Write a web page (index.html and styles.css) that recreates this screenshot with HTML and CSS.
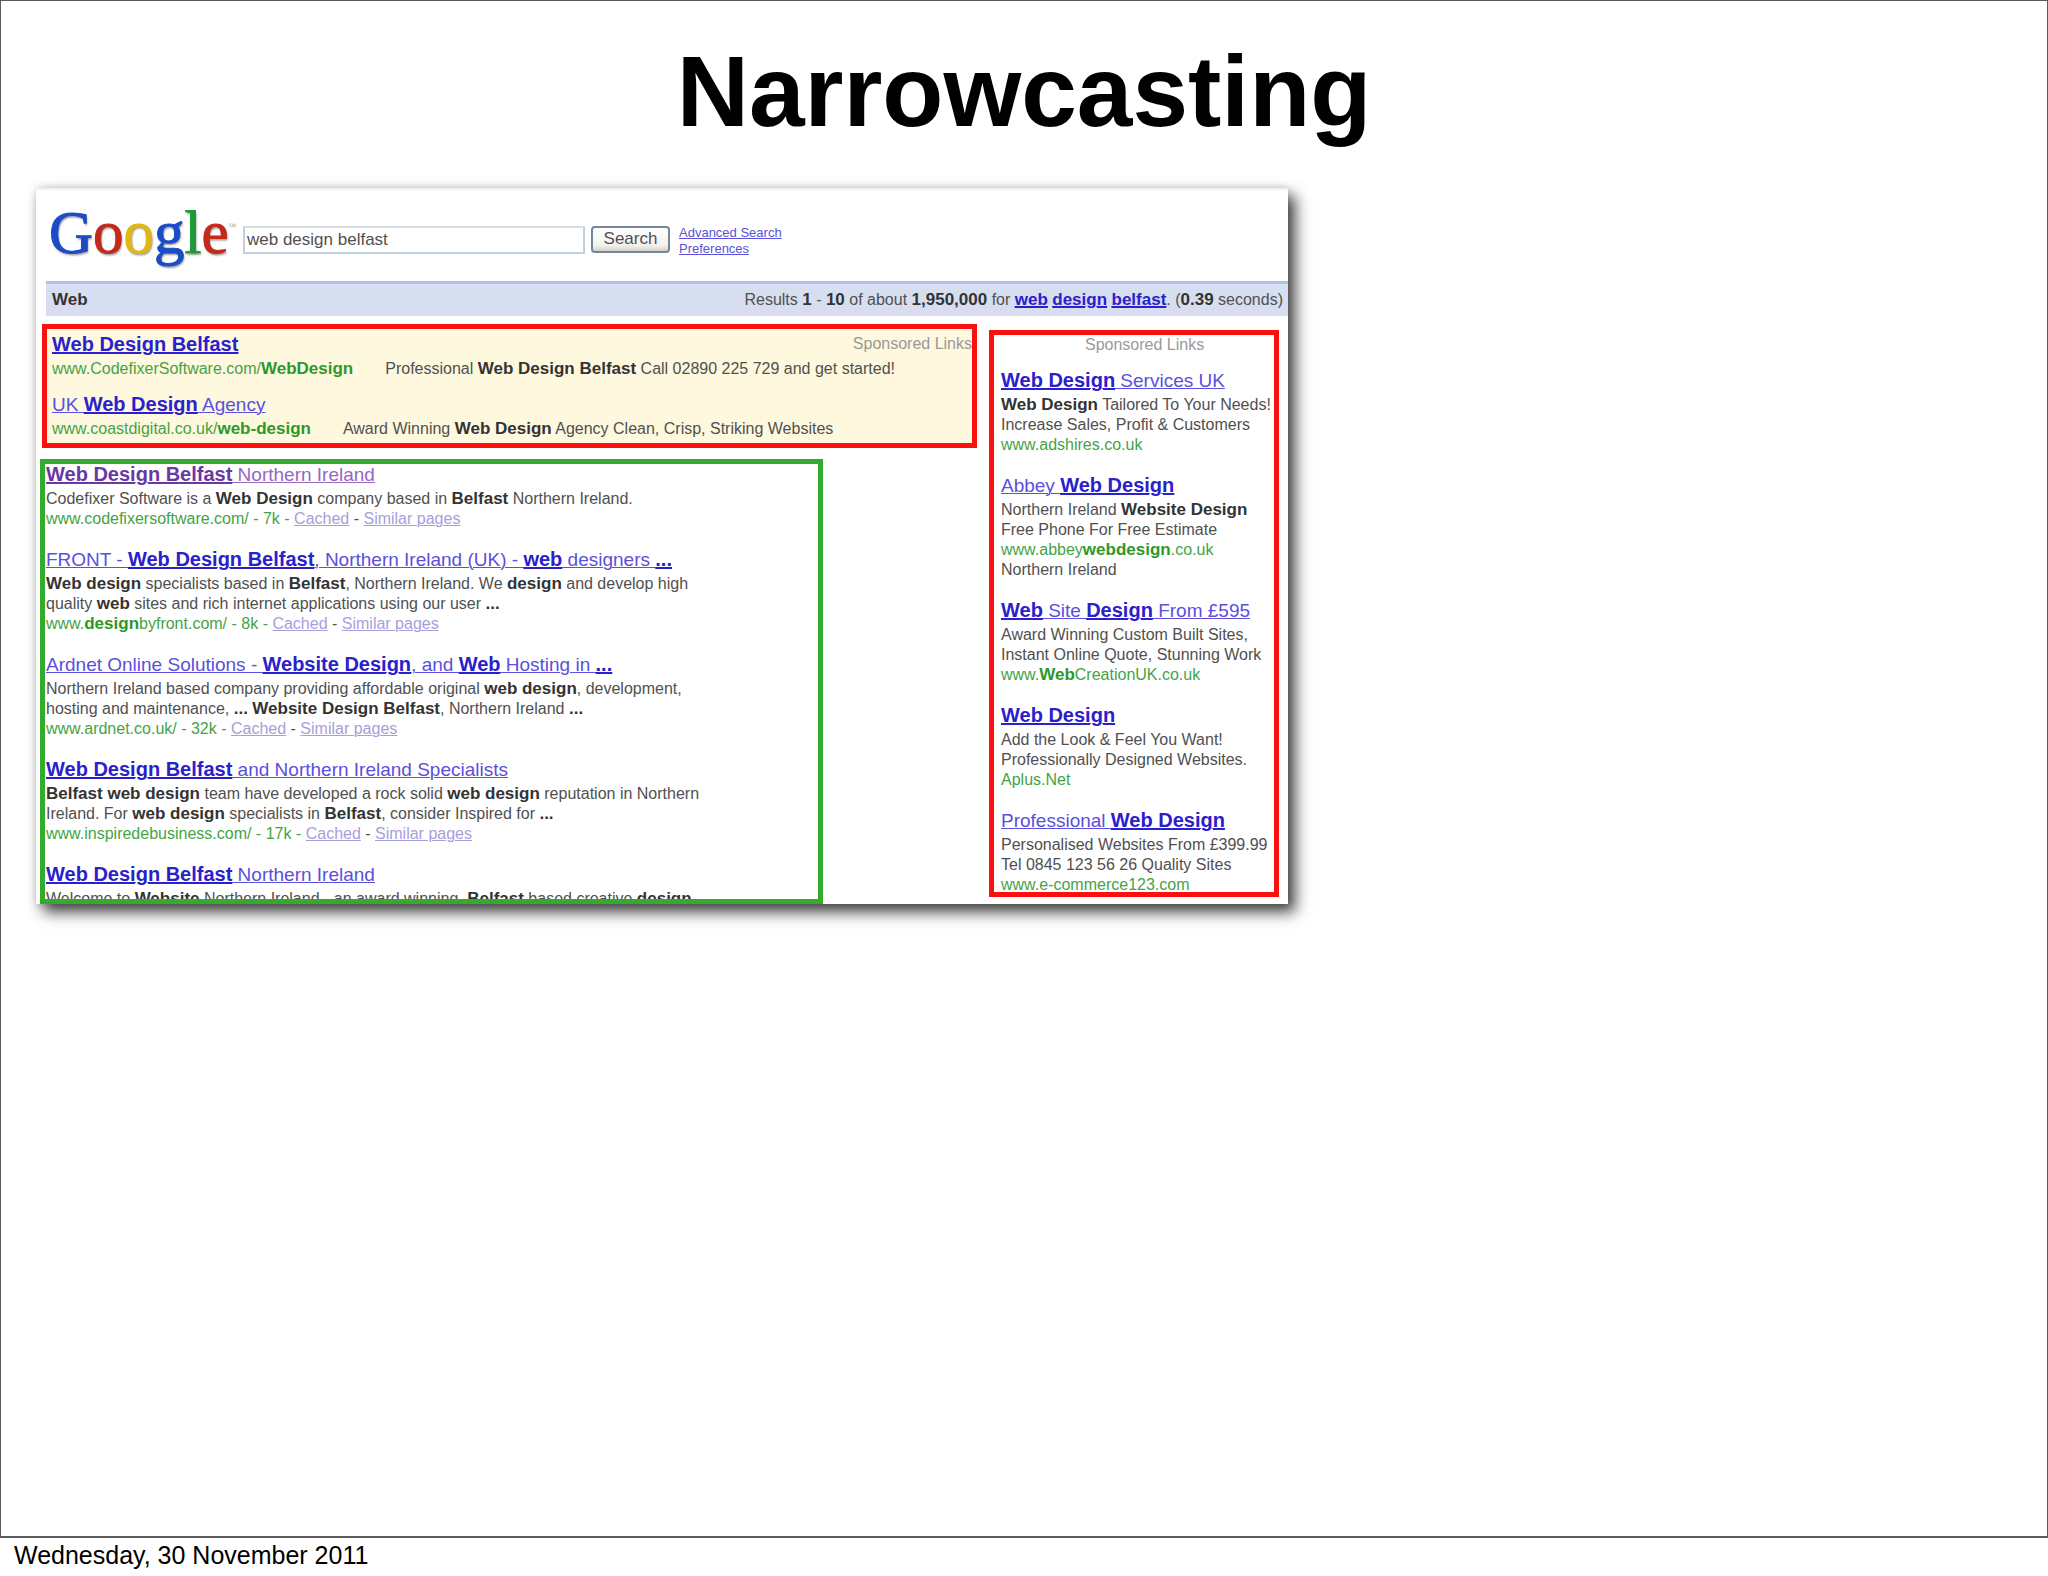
FILE: index.html
```html
<!DOCTYPE html>
<html lang="en">
<head>
<meta charset="utf-8">
<title>Narrowcasting</title>
<link rel="stylesheet" href="styles.css">
</head>
<body>
<main class="slide">
  <h1 class="slide-title">Narrowcasting</h1>
  <section class="shot">
    <header class="top">
      <div class="logo"><span class="blue">G</span><span class="red">o</span><span class="yellow">o</span><span class="blue">g</span><span class="green">l</span><span class="red">e</span><small>™</small></div>
      <form class="search">
        <input class="query" type="text" aria-label="Search query" value="web design belfast">
        <button class="go" type="button">Search</button>
      </form>
      <nav class="options"><a href="#">Advanced Search</a><a href="#">Preferences</a></nav>
    </header>
    <div class="bar">
      <b>Web</b>
      <span>Results <b>1</b> - <b>10</b> of about <b>1,950,000</b> for <a href="#"><b>web</b></a> <a href="#"><b>design</b></a> <a href="#"><b>belfast</b></a>. (<b>0.39</b> seconds)</span>
    </div>
    <div class="columns">
      <div class="main-col">
        <section class="ads">
          <div class="ad">
            <div class="ad-head"><h2><a href="#"><b>Web Design Belfast</b></a></h2><span class="label">Sponsored Links</span></div>
            <div class="ad-line"><cite>www.CodefixerSoftware.com/<b>WebDesign</b></cite><span>Professional <b>Web Design Belfast</b> Call 02890 225 729 and get started!</span></div>
          </div>
          <div class="ad">
            <h2><a href="#">UK <b>Web Design</b> Agency</a></h2>
            <div class="ad-line"><cite>www.coastdigital.co.uk/<b>web-design</b></cite><span>Award Winning <b>Web Design</b> Agency Clean, Crisp, Striking Websites</span></div>
          </div>
        </section>
        <section class="results">
          <article>
            <h2><a class="visited" href="#"><b>Web Design Belfast</b> Northern Ireland</a></h2>
            <p>Codefixer Software is a <b>Web Design</b> company based in <b>Belfast</b> Northern Ireland.</p>
            <p><cite>www.codefixersoftware.com/ - 7k -</cite> <a class="minor" href="#">Cached</a> - <a class="minor" href="#">Similar pages</a></p>
          </article>
          <article>
            <h2><a href="#">FRONT - <b>Web Design Belfast</b>, Northern Ireland (UK) - <b>web</b> designers <b>...</b></a></h2>
            <p><b>Web design</b> specialists based in <b>Belfast</b>, Northern Ireland. We <b>design</b> and develop high<br>quality <b>web</b> sites and rich internet applications using our user <b>...</b></p>
            <p><cite>www.<b>design</b>byfront.com/ - 8k -</cite> <a class="minor" href="#">Cached</a> - <a class="minor" href="#">Similar pages</a></p>
          </article>
          <article>
            <h2><a href="#">Ardnet Online Solutions - <b>Website Design</b>, and <b>Web</b> Hosting in <b>...</b></a></h2>
            <p>Northern Ireland based company providing affordable original <b>web design</b>, development,<br>hosting and maintenance, <b>...</b> <b>Website Design Belfast</b>, Northern Ireland <b>...</b></p>
            <p><cite>www.ardnet.co.uk/ - 32k -</cite> <a class="minor" href="#">Cached</a> - <a class="minor" href="#">Similar pages</a></p>
          </article>
          <article>
            <h2><a href="#"><b>Web Design Belfast</b> and Northern Ireland Specialists</a></h2>
            <p><b>Belfast web design</b> team have developed a rock solid <b>web design</b> reputation in Northern<br>Ireland. For <b>web design</b> specialists in <b>Belfast</b>, consider Inspired for <b>...</b></p>
            <p><cite>www.inspiredebusiness.com/ - 17k -</cite> <a class="minor" href="#">Cached</a> - <a class="minor" href="#">Similar pages</a></p>
          </article>
          <article>
            <h2><a href="#"><b>Web Design Belfast</b> Northern Ireland</a></h2>
            <p>Welcome to <b>Website</b> Northern Ireland - an award winning, <b>Belfast</b> based creative <b>design</b></p>
          </article>
        </section>
      </div>
      <aside class="side">
        <p class="label">Sponsored Links</p>
        <article>
          <h2><a href="#"><b>Web Design</b> Services UK</a></h2>
          <p><b>Web Design</b> Tailored To Your Needs!<br>Increase Sales, Profit &amp; Customers</p>
          <p><cite>www.adshires.co.uk</cite></p>
        </article>
        <article>
          <h2><a href="#">Abbey <b>Web Design</b></a></h2>
          <p>Northern Ireland <b>Website Design</b><br>Free Phone For Free Estimate</p>
          <p><cite>www.abbey<b>webdesign</b>.co.uk</cite></p>
          <p>Northern Ireland</p>
        </article>
        <article>
          <h2><a href="#"><b>Web</b> Site <b>Design</b> From £595</a></h2>
          <p>Award Winning Custom Built Sites,<br>Instant Online Quote, Stunning Work</p>
          <p><cite>www.<b>Web</b>CreationUK.co.uk</cite></p>
        </article>
        <article>
          <h2><a href="#"><b>Web Design</b></a></h2>
          <p>Add the Look &amp; Feel You Want!<br>Professionally Designed Websites.</p>
          <p><cite>Aplus.Net</cite></p>
        </article>
        <article>
          <h2><a href="#">Professional <b>Web Design</b></a></h2>
          <p>Personalised Websites From £399.99<br>Tel 0845 123 56 26 Quality Sites</p>
          <p><cite>www.e-commerce123.com</cite></p>
        </article>
      </aside>
    </div>
  </section>
</main>
<footer class="date">Wednesday, 30 November 2011</footer>
</body>
</html>
```
FILE: styles.css
```css
* { box-sizing: border-box; }

body {
  margin: 0;
  min-height: 100vh;
  display: flex;
  flex-direction: column;
  background: #fff;
  color: #000;
  font-family: "Liberation Sans", Arial, sans-serif;
}

h1, h2, p { margin: 0; }
cite { font-style: normal; }

.slide {
  flex: 1;
  padding: 34px 35px 0;
  border: 1px solid #5a5a5a;
  border-bottom-width: 2px;
}

.slide-title {
  margin-bottom: 41px;
  font-size: 100px;
  line-height: 112px;
  text-align: center;
}

.date {
  padding: 3px 14px 7px;
  font-size: 25px;
  line-height: 28px;
}

/* search page shown on the slide */
.shot {
  width: 100%;
  max-width: 1252px;
  background: #fff;
  border-top: 2px solid #f0f0fc;
  box-shadow: 7px 8px 14px rgba(0, 0, 0, 0.75), 0 0 8px rgba(0, 0, 0, 0.15);
  color: #505050;
  font-size: 16px;
  line-height: 20px;
  white-space: nowrap;
}

.shot b {
  color: #333;
  font-size: 17px;
  line-height: 18px;
}

.top {
  display: flex;
  align-items: center;
  height: 91px;
  padding: 8px 13px 0;
}

.logo {
  flex: 0 0 194px;
  padding-bottom: 20px;
  font-family: "Liberation Serif", "Times New Roman", serif;
  font-size: 61px;
  line-height: 60px;
  text-shadow: 1px 2px 2px rgba(0, 0, 0, 0.4);
  -webkit-text-stroke: 1px;
}
.logo small {
  font-size: 8px;
  vertical-align: 24px;
  color: #999;
  text-shadow: none;
  -webkit-text-stroke: 0;
}
.blue { color: #1c4bc8; }
.red { color: #c42a1c; }
.yellow { color: #e2b714; }
.green { color: #1f9a35; }

.search {
  display: flex;
  gap: 6px;
}
.query {
  width: 342px;
  height: 28px;
  padding: 0 2px;
  border: 2px solid #c3d0e0;
  border-top-color: #d5dde0;
  background: #fff;
  color: #505050;
  font: 17px "Liberation Sans", Arial, sans-serif;
}
.go {
  width: 79px;
  height: 27px;
  padding: 0;
  border: 2px solid #76859c;
  border-radius: 4px;
  background: linear-gradient(#fff, #f2f2ee 75%, #d4d0c8);
  color: #505050;
  font: 17px "Liberation Sans", Arial, sans-serif;
}
.options {
  display: flex;
  flex-direction: column;
  margin-left: 9px;
  padding-top: 2px;
  font-size: 13px;
  line-height: 16px;
}

.shot a {
  color: #5a50dc;
  text-decoration: underline;
  text-decoration-thickness: 1px;
}
.shot a b {
  color: #2a20cc;
  text-decoration: underline;
  text-decoration-thickness: 2px;
}
.shot .visited { color: #9468c0; }
.shot .visited b { color: #6a38a4; }
.shot .minor { color: #a79edc; }

.bar {
  display: flex;
  justify-content: space-between;
  align-items: center;
  height: 35px;
  margin-left: 10px;
  padding: 0 5px 0 6px;
  border-top: 3px solid #b2c0e8;
  background: linear-gradient(#d5e0f0, #d9dcf1);
}

.columns {
  display: grid;
  grid-template-columns: 1fr 290px;
  align-items: start;
  gap: 12px;
  padding: 0 9px 0 4px;
}

.shot h2 {
  margin-bottom: 3px;
  font-size: 19px;
  font-weight: 400;
  line-height: 22px;
}
.shot h2 b {
  font-size: 20px;
  line-height: 20px;
}

.shot cite { color: #45a345; }
.shot cite b { color: #2c982c; }
.label { color: #999; }

.ads {
  display: flex;
  flex-direction: column;
  gap: 15px;
  margin: 8px 0 11px 2px;
  padding: 5px 0 4px 5px;
  border: 5px solid #fb1010;
  background: #fef8df;
}
.ad-head {
  display: flex;
  justify-content: space-between;
}
.ad-line {
  display: flex;
  gap: 32px;
}

.results {
  height: 445px;
  max-width: 783px;
  padding-left: 1px;
  border: 5px solid #35ab2d;
  overflow: hidden;
}
article { margin-bottom: 20px; }

.side {
  height: 567px;
  margin-top: 14px;
  padding: 0 0 0 7px;
  border: 5px solid #fb1010;
  overflow: hidden;
}
.side .label {
  margin-bottom: 15px;
  padding-left: 84px;
}
```
